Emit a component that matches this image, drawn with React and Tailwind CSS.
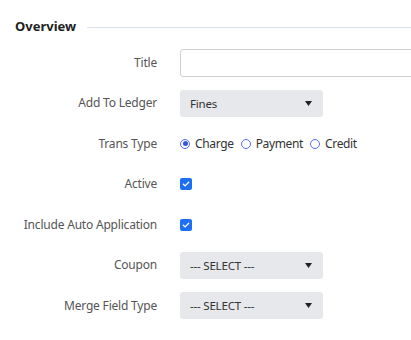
import React from "react";

function Check() {
  return (
    <span className="flex h-[12px] w-[12px] items-center justify-center rounded-[2px] bg-[#1c6ef2]">
      <svg width="8" height="8" viewBox="0 0 8 8" fill="none">
        <path d="M1.3 4.2 L3.1 5.9 L6.7 2.2" stroke="white" strokeWidth="1.3" strokeLinecap="round" strokeLinejoin="round" />
      </svg>
    </span>
  );
}

function Radio({ checked, label }) {
  return (
    <span className="flex items-center gap-[5px]">
      <span className="flex h-[10px] w-[10px] items-center justify-center rounded-full border border-[#5a6df0] bg-white">
        {checked && <span className="h-[5px] w-[5px] rounded-full bg-[#2f55e8]" />}
      </span>
      <span className="tracking-[-0.35px] text-[#333]">{label}</span>
    </span>
  );
}

function Select({ value }) {
  return (
    <div className="flex h-[27px] w-[143px] items-center justify-between rounded-[3px] bg-[#e6e8ec] pl-[10px] pr-[11px] text-[11.5px] text-[#333]">
      <span>{value}</span>
      <svg width="7" height="5" viewBox="0 0 7 5"><path d="M0 0 L7 0 L3.5 5 Z" fill="#222" /></svg>
    </div>
  );
}

function Row({ label, children }) {
  return (
    <div className="flex h-[40.5px] items-center">
      <div className="w-[157px] shrink-0 text-right text-[#555]">{label}</div>
      <div className="ml-[23px] flex flex-1 items-center">{children}</div>
    </div>
  );
}

export default function App() {
  return (
    <div className="h-[340px] w-[411px] overflow-hidden bg-white text-[12px] tracking-[-0.2px]" style={{ fontFamily: '"Noto Sans", sans-serif' }}>
      <div className="flex items-center pt-[17px] pl-[15px]">
        <span className="text-[13px] font-bold tracking-normal text-[#222]">Overview</span>
        <span className="ml-[11px] mt-[2px] h-px flex-1 bg-[#d9e3f0]" />
      </div>
      <div className="mt-[6px]">
        <Row label="Title">
          <div className="h-[28px] w-[260px] shrink-0 rounded-[3px] border border-[#cfcfcf] bg-white" />
        </Row>
        <Row label="Add To Ledger">
          <Select value="Fines" />
        </Row>
        <Row label="Trans Type">
          <div className="flex items-center gap-[7px]">
            <Radio checked label="Charge" />
            <Radio label="Payment" />
            <Radio label="Credit" />
          </div>
        </Row>
        <Row label="Active">
          <Check />
        </Row>
        <Row label="Include Auto Application">
          <Check />
        </Row>
        <Row label="Coupon">
          <Select value="--- SELECT ---" />
        </Row>
        <Row label="Merge Field Type">
          <Select value="--- SELECT ---" />
        </Row>
      </div>
    </div>
  );
}
